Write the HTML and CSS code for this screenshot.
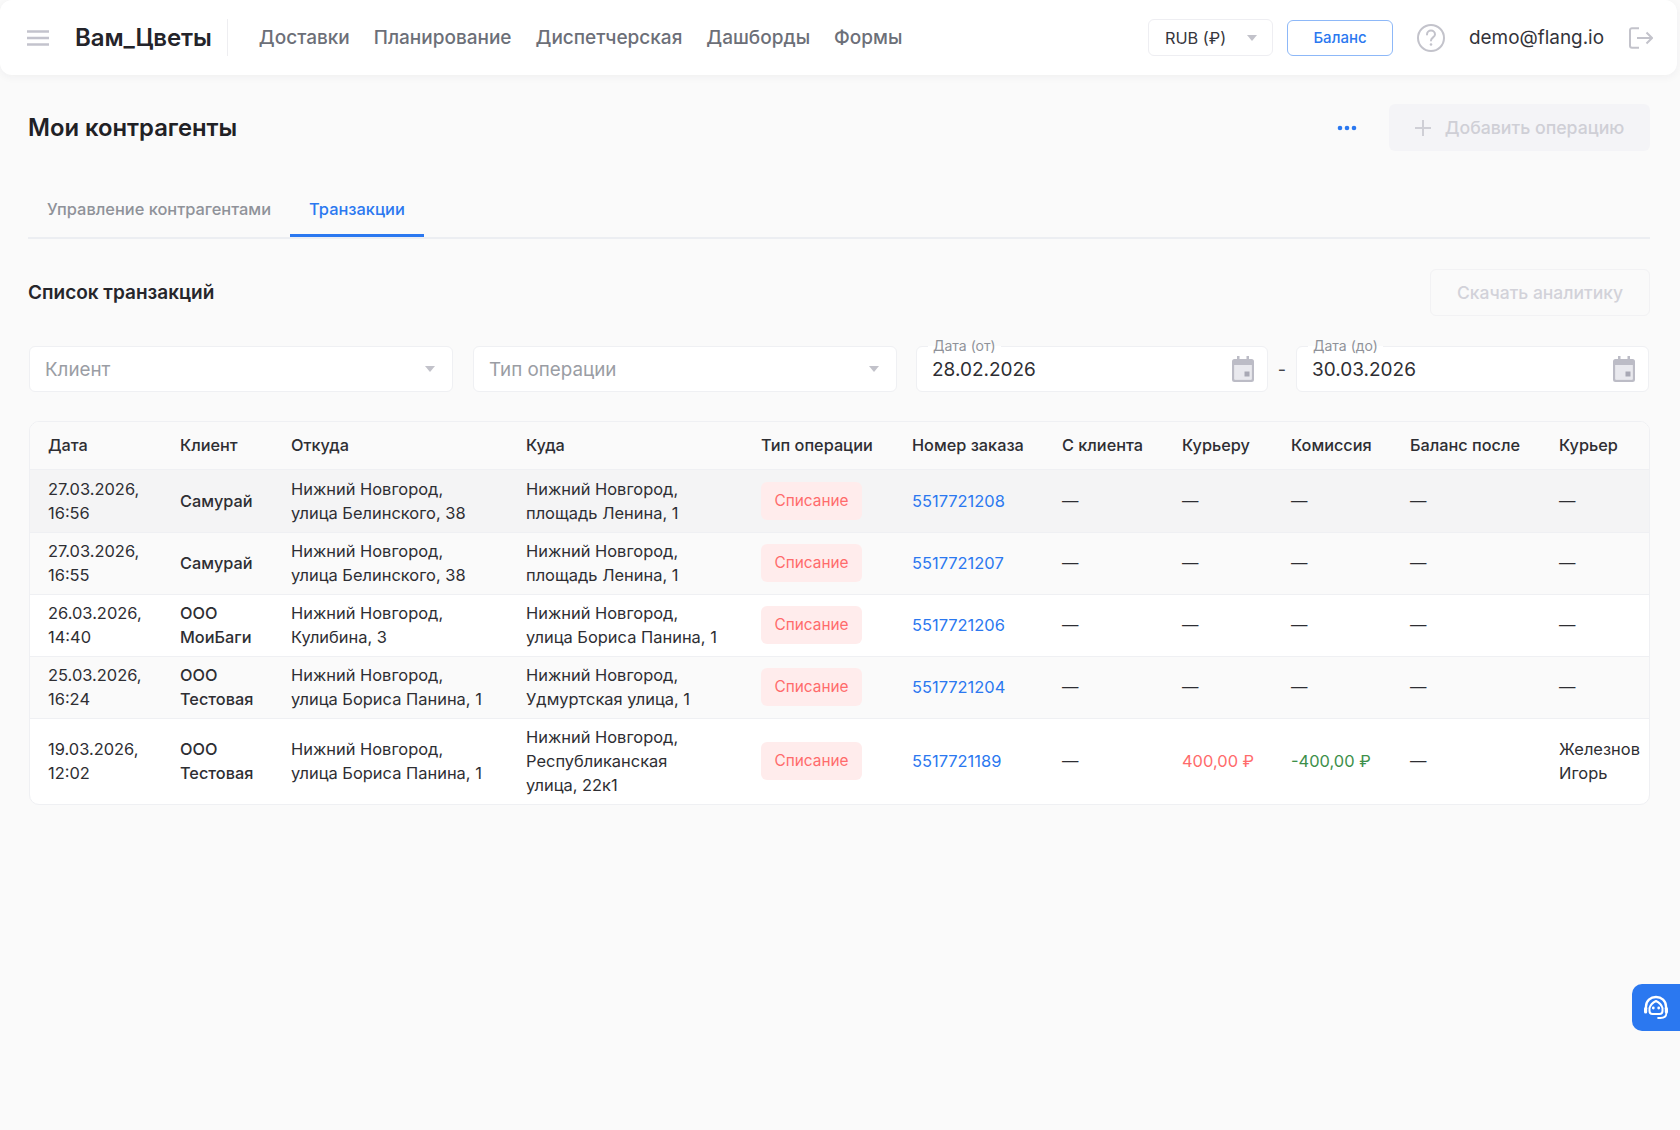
FILE: index.html
```html
<!DOCTYPE html>
<html lang="ru">
<head>
<meta charset="utf-8">
<title>Мои контрагенты</title>
<link rel="stylesheet" href="styles.css">
</head>
<body>
<header class="topbar">
  <svg class="burger" viewBox="0 0 22 16" width="22" height="16"><path d="M0 1.5h22M0 8h22M0 14.5h22" stroke="#c3c3cd" stroke-width="2.4" fill="none"/></svg>
  <div class="brand">Вам_Цветы</div>
  <nav class="nav">
    <a>Доставки</a><a>Планирование</a><a>Диспетчерская</a><a>Дашборды</a><a>Формы</a>
  </nav>
  <div class="top-right">
    <div class="currency"><span>RUB (₽)</span><i class="caret"></i></div>
    <button class="balance">Баланс</button>
    <svg class="help" viewBox="0 0 30 30" width="30" height="30"><circle cx="15" cy="15" r="13" fill="none" stroke="#c3c3cb" stroke-width="2"/><path d="M11 11.6a4 4 0 0 1 8 0c0 2.6-4 3-4 5.8" fill="none" stroke="#c3c3cb" stroke-width="2" stroke-linecap="round"/><circle cx="15" cy="21.5" r="1.3" fill="#c3c3cb"/></svg>
    <span class="email">demo@flang.io</span>
    <svg class="logout" viewBox="0 0 24 22" width="24" height="22"><path d="M10 1.2H3a2 2 0 0 0-2 2v15.6a2 2 0 0 0 2 2h7M8 11h15M17.5 5.5 23 11l-5.500 5.500" fill="none" stroke="#c3c3cb" stroke-width="2"/></svg>
  </div>
</header>

<main class="page">
  <div class="page-head">
    <h1>Мои контрагенты</h1>
    <div class="page-actions">
      <svg class="dots" viewBox="0 0 20 6" width="20" height="6"><circle cx="3" cy="3" r="2.300" fill="#2b78f0"/><circle cx="10" cy="3" r="2.300" fill="#2b78f0"/><circle cx="17" cy="3" r="2.300" fill="#2b78f0"/></svg>
      <button class="add" disabled><svg viewBox="0 0 16 16" width="16" height="16"><path d="M8 0v16M0 8h16" stroke="#cfcfd6" stroke-width="2"/></svg>Добавить операцию</button>
    </div>
  </div>

  <div class="tabs">
    <a class="tab">Управление контрагентами</a>
    <a class="tab active">Транзакции</a>
  </div>

  <div class="section-head">
    <h2>Список транзакций</h2>
    <button class="download" disabled>Скачать аналитику</button>
  </div>

  <div class="filters">
    <div class="field select"><span class="placeholder">Клиент</span><i class="caret"></i></div>
    <div class="field select"><span class="placeholder">Тип операции</span><i class="caret"></i></div>
    <div class="field date"><label>Дата (от)</label><span>28.02.2026</span>
      <svg viewBox="0 0 22 26" width="22" height="26"><path d="M5 0h2.500v3h7V0H17v3h2.500A2.500 2.500 0 0 1 22 5.500v18a2.500 2.500 0 0 1-2.500 2.500h-17A2.500 2.500 0 0 1 0 23.500v-18A2.500 2.500 0 0 1 2.500 3H5zM2.500 9v14.500h17V9zM12.500 15.500h5v5h-5z" fill="#bcbcc6" fill-rule="evenodd"/><path d="M2.500 9h17v14.500h-17z" fill="#e9e9ee"/><path d="M12.500 15.500h5v5h-5z" fill="#a9a9b5"/></svg></div>
    <span class="dash">-</span>
    <div class="field date"><label>Дата (до)</label><span>30.03.2026</span>
      <svg viewBox="0 0 22 26" width="22" height="26"><path d="M5 0h2.500v3h7V0H17v3h2.500A2.500 2.500 0 0 1 22 5.500v18a2.500 2.500 0 0 1-2.500 2.500h-17A2.500 2.500 0 0 1 0 23.500v-18A2.500 2.500 0 0 1 2.500 3H5zM2.500 9v14.500h17V9zM12.500 15.500h5v5h-5z" fill="#bcbcc6" fill-rule="evenodd"/><path d="M2.500 9h17v14.500h-17z" fill="#e9e9ee"/><path d="M12.500 15.500h5v5h-5z" fill="#a9a9b5"/></svg></div>
  </div>

  <div class="table-wrap">
    <table class="grid">
      <colgroup>
        <col class="c1"><col class="c2"><col class="c3"><col class="c4"><col class="c5"><col class="c6"><col class="c7"><col class="c8"><col class="c9"><col class="c10"><col class="c11">
      </colgroup>
      <thead>
        <tr><th>Дата</th><th>Клиент</th><th>Откуда</th><th>Куда</th><th>Тип операции</th><th>Номер заказа</th><th>С клиента</th><th>Курьеру</th><th>Комиссия</th><th>Баланс после</th><th>Курьер</th></tr>
      </thead>
      <tbody>
        <tr class="hover">
          <td>27.03.2026,<br>16:56</td><td class="client">Самурай</td><td>Нижний Новгород,<br>улица Белинского, 38</td><td>Нижний Новгород,<br>площадь Ленина, 1</td><td><span class="chip">Списание</span></td><td><a class="order">5517721208</a></td><td>—</td><td>—</td><td>—</td><td>—</td><td>—</td>
        </tr>
        <tr class="even">
          <td>27.03.2026,<br>16:55</td><td class="client">Самурай</td><td>Нижний Новгород,<br>улица Белинского, 38</td><td>Нижний Новгород,<br>площадь Ленина, 1</td><td><span class="chip">Списание</span></td><td><a class="order">5517721207</a></td><td>—</td><td>—</td><td>—</td><td>—</td><td>—</td>
        </tr>
        <tr>
          <td>26.03.2026,<br>14:40</td><td class="client">ООО<br>МоиБаги</td><td>Нижний Новгород,<br>Кулибина, 3</td><td>Нижний Новгород,<br>улица Бориса Панина, 1</td><td><span class="chip">Списание</span></td><td><a class="order">5517721206</a></td><td>—</td><td>—</td><td>—</td><td>—</td><td>—</td>
        </tr>
        <tr class="even">
          <td>25.03.2026,<br>16:24</td><td class="client">ООО<br>Тестовая</td><td>Нижний Новгород,<br>улица Бориса Панина, 1</td><td>Нижний Новгород,<br>Удмуртская улица, 1</td><td><span class="chip">Списание</span></td><td><a class="order">5517721204</a></td><td>—</td><td>—</td><td>—</td><td>—</td><td>—</td>
        </tr>
        <tr class="last">
          <td>19.03.2026,<br>12:02</td><td class="client">ООО<br>Тестовая</td><td>Нижний Новгород,<br>улица Бориса Панина, 1</td><td>Нижний Новгород,<br>Республиканская<br>улица, 22к1</td><td><span class="chip">Списание</span></td><td><a class="order">5517721189</a></td><td>—</td><td class="red">400,00 ₽</td><td class="green">-400,00 ₽</td><td>—</td><td>Железнов<br>Игорь</td>
        </tr>
      </tbody>
    </table>
  </div>
</main>

<button class="support" aria-label="Поддержка">
  <svg viewBox="0 0 26 26" width="26" height="26"><path d="M3 14V11.500C3 5.800 7.500 2 13 2s10 3.800 10 9.500V14" fill="none" stroke="#fff" stroke-width="2.400"/><path d="M6.500 13c1-3.500 3.500-5.500 6.500-7 3 1.500 5.500 3.500 6.500 7v3a3 3 0 0 1-3 3h-7a3 3 0 0 1-3-3z" fill="none" stroke="#fff" stroke-width="2"/><circle cx="10.300" cy="13" r="1.400" fill="#fff"/><circle cx="15.700" cy="13" r="1.400" fill="#fff"/><rect x="1" y="12" width="3.200" height="6.500" rx="1.600" fill="#fff"/><rect x="21.800" y="12" width="3.200" height="6.500" rx="1.600" fill="#fff"/><path d="M23.400 18c0 3.200-2.500 5-6 5h-3" fill="none" stroke="#fff" stroke-width="1.800"/></svg>
</button>
</body>
</html>
```

FILE: styles.css
```css
* { box-sizing: border-box; }
html, body { margin: 0; height: 100%; }
body {
  background: #fafafa;
  font-family: Inter, "Noto Sans", sans-serif;
  color: #2b2b2f;
  overflow: hidden;
  height: 1130px;
}
button { font-family: inherit; }

.topbar {
  height: 75px;
  margin-right: 3px;
  background: #fff;
  border-radius: 12px;
  box-shadow: 0 2px 8px rgba(30, 30, 60, 0.05);
  display: flex;
  align-items: center;
  padding: 0 24px 0 27px;
}
.burger { flex: none; margin-right: 26px; }
.brand {
  font-size: 24px;
  font-weight: 600;
  color: #24242a;
  letter-spacing: -0.1px;
  padding-right: 15px;
  height: 37px;
  line-height: 37px;
  border-right: 1px solid #eeeef1;
}
.nav { display: flex; gap: 24px; margin-left: 31px; }
.nav a { font-size: 19px; font-weight: 500; color: #6c6f78; }
.top-right { margin-left: auto; display: flex; align-items: center; }
.currency {
  width: 125px;
  height: 37px;
  border: 1px solid #eeeef2;
  border-radius: 6px;
  display: flex;
  align-items: center;
  padding: 0 15px 0 16px;
  justify-content: space-between;
  font-size: 16.300px;
  color: #36363c;
}
.caret {
  display: block;
  width: 0;
  height: 0;
  border-left: 5.500px solid transparent;
  border-right: 5.500px solid transparent;
  border-top: 6px solid #c2c2ca;
}
.balance {
  width: 106px;
  height: 36px;
  margin-left: 14px;
  background: #fff;
  border: 1px solid #8db8f8;
  border-radius: 6px;
  color: #2b78f0;
  font-size: 15px;
  font-weight: 500;
}
.help { margin-left: 23px; flex: none; }
.email { margin-left: 23px; font-size: 18.900px; color: #33333a; }
.logout { margin-left: 25px; flex: none; }

.page { padding: 0 30px 0 28px; }
.page-head {
  height: 76px;
  margin-top: 29px;
  display: flex;
  align-items: flex-start;
  justify-content: space-between;
}
h1 {
  margin: 0;
  height: 47px;
  line-height: 48px;
  font-size: 23.800px;
  font-weight: 600;
  color: #212125;
}
.page-actions { display: flex; align-items: center; gap: 32px; }
.add {
  width: 261px;
  height: 47px;
  background: #f4f4f7;
  border: 0;
  border-radius: 6px;
  color: #cfcfd6;
  font-size: 17.700px;
  font-weight: 500;
  display: flex;
  align-items: center;
  justify-content: center;
  gap: 14px;
}
.tabs {
  height: 58px;
  border-bottom: 2px solid #eceef2;
  display: flex;
  margin-top: 1px;
}
.tab {
  padding: 0 19px;
  height: 56px;
  line-height: 56px;
  font-size: 16.400px;
  font-weight: 500;
  color: #8f9299;
}
.tab.active { color: #2b78f0; border-bottom: 3px solid #2b78f0; }

.section-head {
  height: 47px;
  margin-top: 30px;
  display: flex;
  align-items: center;
  justify-content: space-between;
}
h2 { margin: 0; font-size: 19px; font-weight: 600; color: #26262b; }
.download {
  width: 220px;
  height: 47px;
  background: #fafafa;
  border: 1px solid #f2f2f4;
  border-radius: 6px;
  color: #d2d2d9;
  font-size: 17.500px;
  font-weight: 500;
}

.filters { display: flex; align-items: center; margin: 30px 0 0 1px; height: 46px; }
.field {
  height: 46px;
  background: #fff;
  border: 1px solid #eff0f3;
  border-radius: 6px;
  display: flex;
  align-items: center;
  justify-content: space-between;
  font-size: 19px;
  position: relative;
}
.select { width: 424px; padding: 0 17px 0 15px; margin-right: 20px; }
.select + .select { margin-right: 19px; }
.placeholder { color: #9a9da4; font-size: 18.800px; }
.date { width: 352px; padding: 0 13px 0 15px; color: #2e2e33; }
.date + .dash + .date { width: 353px; }
.date label {
  position: absolute;
  top: -10px;
  left: 11px;
  padding: 0 5px;
  font-size: 14px;
  line-height: 18px;
  color: #8f9299;
  background: linear-gradient(#fafafa 50%, #fff 50%);
}
.dash { width: 28px; text-align: center; font-size: 18px; color: #44444a; }

.table-wrap {
  margin-top: 29px;
  margin-left: 1px;
  width: 1621px;
  height: 384px;
  border: 1px solid #eff0f3;
  border-radius: 10px;
  overflow: hidden;
  background: #fff;
}
.grid { width: 100%; border-collapse: collapse; table-layout: fixed; font-size: 16.450px; color: #2e2e33; }
.c1 { width: 131px; } .c2 { width: 111px; } .c3 { width: 235px; } .c4 { width: 235px; }
.c5 { width: 151px; } .c6 { width: 150px; } .c7 { width: 120px; } .c8 { width: 109px; }
.c9 { width: 119px; } .c10 { width: 149px; } .c11 { width: 110px; }
th {
  height: 47px;
  padding: 0 0 0 19px;
  text-align: left;
  font-size: 16.300px;
  font-weight: 500;
  background: #fafafa;
  color: #2e2e33;
  white-space: nowrap;
  border-bottom: 1px solid #eff0f3;
}
td {
  height: 62px;
  padding: 2px 0 0 19px;
  line-height: 23.600px;
  white-space: nowrap;
  border-bottom: 1px solid #eff0f3;
}
th:first-child, td:first-child { padding-left: 18px; }
tr.hover td { height: 63px; background: #f4f4f5; }
tr.even td { background: #fafafa; }
tr.last td { height: 85px; border-bottom: 0; }
td.client { font-size: 16.300px; font-weight: 500; }
.chip {
  display: inline-block;
  width: 101px;
  height: 38px;
  line-height: 38px;
  margin-top: -2px;
  vertical-align: middle;
  text-align: center;
  background: #ffecec;
  color: #ff6b6b;
  border-radius: 6px;
  font-size: 15.400px;
  font-weight: 400;
}
.order { color: #2b78f0; }
.red { color: #ff6b6b; }
.green { color: #3d8f4a; }

.support {
  position: fixed;
  right: 0;
  top: 984px;
  width: 48px;
  height: 47px;
  background: #2b78f0;
  border: 0;
  border-radius: 10px 0 0 10px;
  padding: 0;
  display: flex;
  align-items: center;
  justify-content: center;
}
```
